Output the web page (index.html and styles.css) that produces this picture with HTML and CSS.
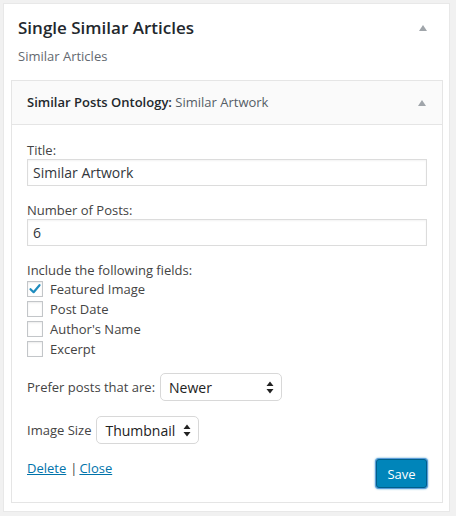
FILE: index.html
```html
<!DOCTYPE html>
<html>
<head>
<meta charset="utf-8">
<link rel="stylesheet" href="styles.css">
</head>
<body>
<div class="panel">
  <div class="panel-head">
    <h2 class="panel-title">Single Similar Articles</h2>
    <span class="toggle toggle-outer"></span>
  </div>
  <div class="panel-desc">Similar Articles</div>
  <div class="widget">
    <div class="widget-head">
      <span class="widget-title"><strong>Similar Posts Ontology:</strong> <span class="in-title">Similar Artwork</span></span>
      <span class="toggle"></span>
    </div>
    <div class="widget-body">
      <div class="field">
        <label class="lbl">Title:</label>
        <div class="input">Similar Artwork</div>
      </div>
      <div class="field">
        <label class="lbl">Number of Posts:</label>
        <div class="input">6</div>
      </div>
      <div class="field checks">
        <label class="lbl">Include the following fields:</label>
        <div class="check-row"><span class="cb checked"><svg width="14" height="14" viewBox="0 0 14 14"><path d="M2.5 7.2 L5.6 10.2 L11.5 3.2" fill="none" stroke="#1e8cbe" stroke-width="2.2" stroke-linecap="round" stroke-linejoin="round"/></svg></span><span>Featured Image</span></div>
        <div class="check-row"><span class="cb"></span><span>Post Date</span></div>
        <div class="check-row"><span class="cb"></span><span>Author's Name</span></div>
        <div class="check-row"><span class="cb"></span><span>Excerpt</span></div>
      </div>
      <div class="field inline">
        <label class="lbl">Prefer posts that are:</label>
        <div class="select sel-newer"><span>Newer</span><svg class="arr" width="8" height="13" viewBox="0 0 8 13"><path d="M4 0.5 L7.5 5 L0.5 5 Z M0.5 8 L7.5 8 L4 12.5 Z" fill="#222"/></svg></div>
      </div>
      <div class="field inline">
        <label class="lbl">Image Size</label>
        <div class="select sel-size"><span>Thumbnail</span><svg class="arr" width="8" height="13" viewBox="0 0 8 13"><path d="M4 0.5 L7.5 5 L0.5 5 Z M0.5 8 L7.5 8 L4 12.5 Z" fill="#222"/></svg></div>
      </div>
      <div class="actions">
        <div class="links"><a href="#">Delete</a><span class="sep">|</span><a href="#">Close</a></div>
        <button class="btn-save">Save</button>
      </div>
    </div>
  </div>
</div>
</body>
</html>
```

FILE: styles.css
```css
* { box-sizing: border-box; }
html, body { margin: 0; padding: 0; }
body {
  background: #f1f1f1;
  font-family: "Open Sans", "Liberation Sans", sans-serif;
  color: #444;
  font-size: 13px;
  width: 456px;
  height: 516px;
  overflow: hidden;
}
.panel {
  margin: 3px 0 0 3px;
  width: 447px;
  background: #fff;
  border: 1px solid #e8e8e8;
  padding: 0 6px 8px 7px;
}
.panel-head {
  position: relative;
  padding: 12px 0 0 7px;
}
.panel-title {
  margin: 0;
  font-size: 17px;
  line-height: 24px;
  font-weight: 600;
  color: #23282d;
}
.toggle {
  position: absolute;
  width: 0; height: 0;
  border-left: 4px solid transparent;
  border-right: 4px solid transparent;
  border-bottom: 6px solid #a0a5aa;
}
.toggle-outer { right: 16px; top: 21px; }
.panel-desc {
  padding: 6px 0 0 7px;
  font-size: 13px;
  line-height: 20px;
  color: #646970;
}
.widget {
  margin-top: 14px;
  border: 1px solid #e5e5e5;
  width: 432px;
}
.widget-head {
  position: relative;
  height: 44px;
  background: #fafafa;
  border-bottom: 1px solid #e5e5e5;
  padding: 0 15px;
  display: flex;
  align-items: center;
}
.widget-head .toggle { right: 16px; top: 19px; }
.widget-title {
  font-size: 13px;
  color: #23282d;
  padding-bottom: 1px;
}
.widget-title strong { font-weight: 600; }
.in-title { color: #555d66; }
.widget-body {
  padding: 16px 15px 14px 15px;
}
.field { margin-bottom: 15px; }
.field.checks { margin-bottom: 14px; }
.lbl {
  display: block;
  font-size: 13px;
  line-height: 18px;
  color: #444;
}
.input {
  height: 27px;
  width: 400px;
  border: 1px solid #dcdcdc;
  box-shadow: inset 0 1px 2px rgba(0,0,0,.05);
  padding: 0 5px;
  font-size: 14px;
  line-height: 25px;
  color: #32373c;
}
.check-row {
  display: flex;
  align-items: center;
  height: 20px;
  font-size: 13px;
  color: #444;
}
.cb {
  width: 16px;
  height: 16px;
  border: 1px solid #c3c6c9;
  box-shadow: inset 0 1px 2px rgba(0,0,0,.08);
  margin-right: 7px;
  display: flex;
  align-items: center;
  justify-content: center;
  background: #fff;
}
.cb svg { display: block; }
.field.inline {
  display: flex;
  align-items: center;
}
.field.inline .lbl { margin-right: 5px; }
.select {
  display: flex;
  align-items: center;
  justify-content: space-between;
  height: 28px;
  border: 1px solid #d8d8d8;
  border-radius: 5px;
  background: #fff;
  font-size: 14px;
  color: #222;
  padding: 0 7px 0 8px;
}
.sel-newer { width: 122px; }
.sel-size { width: 103px; }
.actions {
  display: flex;
  justify-content: space-between;
  align-items: flex-start;
  margin-top: 13px;
}
.links {
  font-size: 13px;
  line-height: 18px;
  color: #444;
}
.links a { color: #0073aa; text-decoration: underline; }
.sep { margin: 0 2px 0 4px; }
.btn-save {
  width: 51px;
  height: 29px;
  background: #0085ba;
  border: 1px solid #005f8a;
  border-radius: 3px;
  box-shadow: 0 0 0 1px #5b9dd9, 0 0 2px 1px rgba(30,140,190,.8);
  color: #fff;
  font-family: "Open Sans", "Liberation Sans", sans-serif;
  font-size: 13px;
  padding: 0;
  margin-right: 0;
}
```
